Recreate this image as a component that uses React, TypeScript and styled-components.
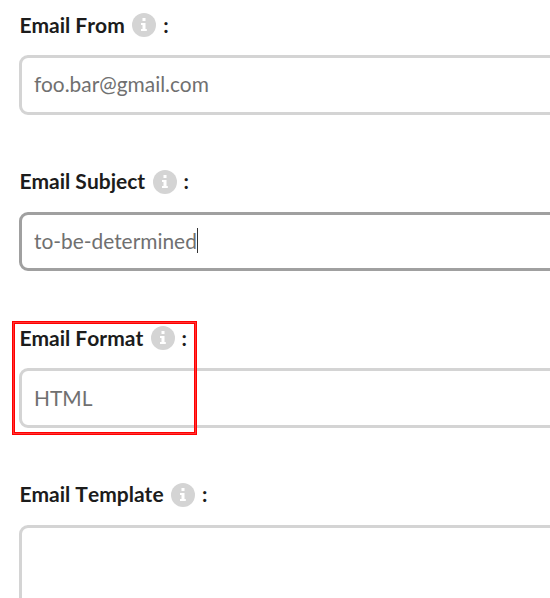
import React from 'react';
import styled, { createGlobalStyle } from 'styled-components';

const Global = createGlobalStyle`
  * { box-sizing: border-box; }
  body { margin: 0; background: #fff; overflow: hidden; font-family: Lato, sans-serif; }
`;
const Form = styled.form`
  position: relative; width: 550px; height: 598px; padding: 10px 0 0 19.4px; overflow: hidden;
  display: flex; flex-direction: column;
`;
const Field = styled.div`height: 156.6px; flex: none;`;
const Label = styled.label`
  display: flex; align-items: center; height: 30px;
  font-size: 21px; font-weight: 700; color: #1c1c1c; white-space: pre; font-kerning: none;
`;
const LabelText = styled.span`margin-top: -2px;`;
const Info = styled.svg`width: 24px; height: 24px; margin: 0 7px 0 7.4px; flex: none;`;
const Box = styled.div<{ $active?: boolean; $tall?: boolean }>`
  display: flex; align-items: center; width: 640px; height: ${p => (p.$tall ? 200 : 59.4)}px; margin-top: 15.2px;
  padding: 0 0 2px 11.6px; border: 3px solid ${p => (p.$active ? '#a0a0a0' : '#d4d4d4')}; border-radius: 9px;
  font-size: 20.9px; color: #707070;
`;
const Caret = styled.span`width: 1px; height: 25px; background: #333;`;
const Highlight = styled.div`
  position: absolute; left: 12px; top: 321px; width: 185px; height: 114px; border: 1px solid #ff0000;
  box-shadow: inset 0 0 0 1px #ff3434, inset 0 0 0 2px #ff0000;
`;

const fields = [
  { label: 'Email From', value: 'foo.bar@gmail.com' },
  { label: 'Email Subject', value: 'to-be-determined', active: true },
  { label: 'Email Format', value: 'HTML' },
  { label: 'Email Template', value: '', tall: true },
];

export default function App() {
  return (
    <Form>
      <Global />
      {fields.map(f => (
        <Field key={f.label}>
          <Label>
            <LabelText>{f.label}</LabelText>
            <Info viewBox="0 0 24 24">
              <circle cx="12" cy="12" r="12" fill="#d4d4d4" />
              <path d="M10.5 5h3v3h-3zM9 10h4.5v6h1.3v2H9v-2h1.5v-4H9z" fill="#fff" />
            </Info>
            <LabelText>:</LabelText>
          </Label>
          <Box $active={f.active} $tall={f.tall}>
            {f.value}
            {f.active && <Caret />}
          </Box>
        </Field>
      ))}
      <Highlight />
    </Form>
  );
}
